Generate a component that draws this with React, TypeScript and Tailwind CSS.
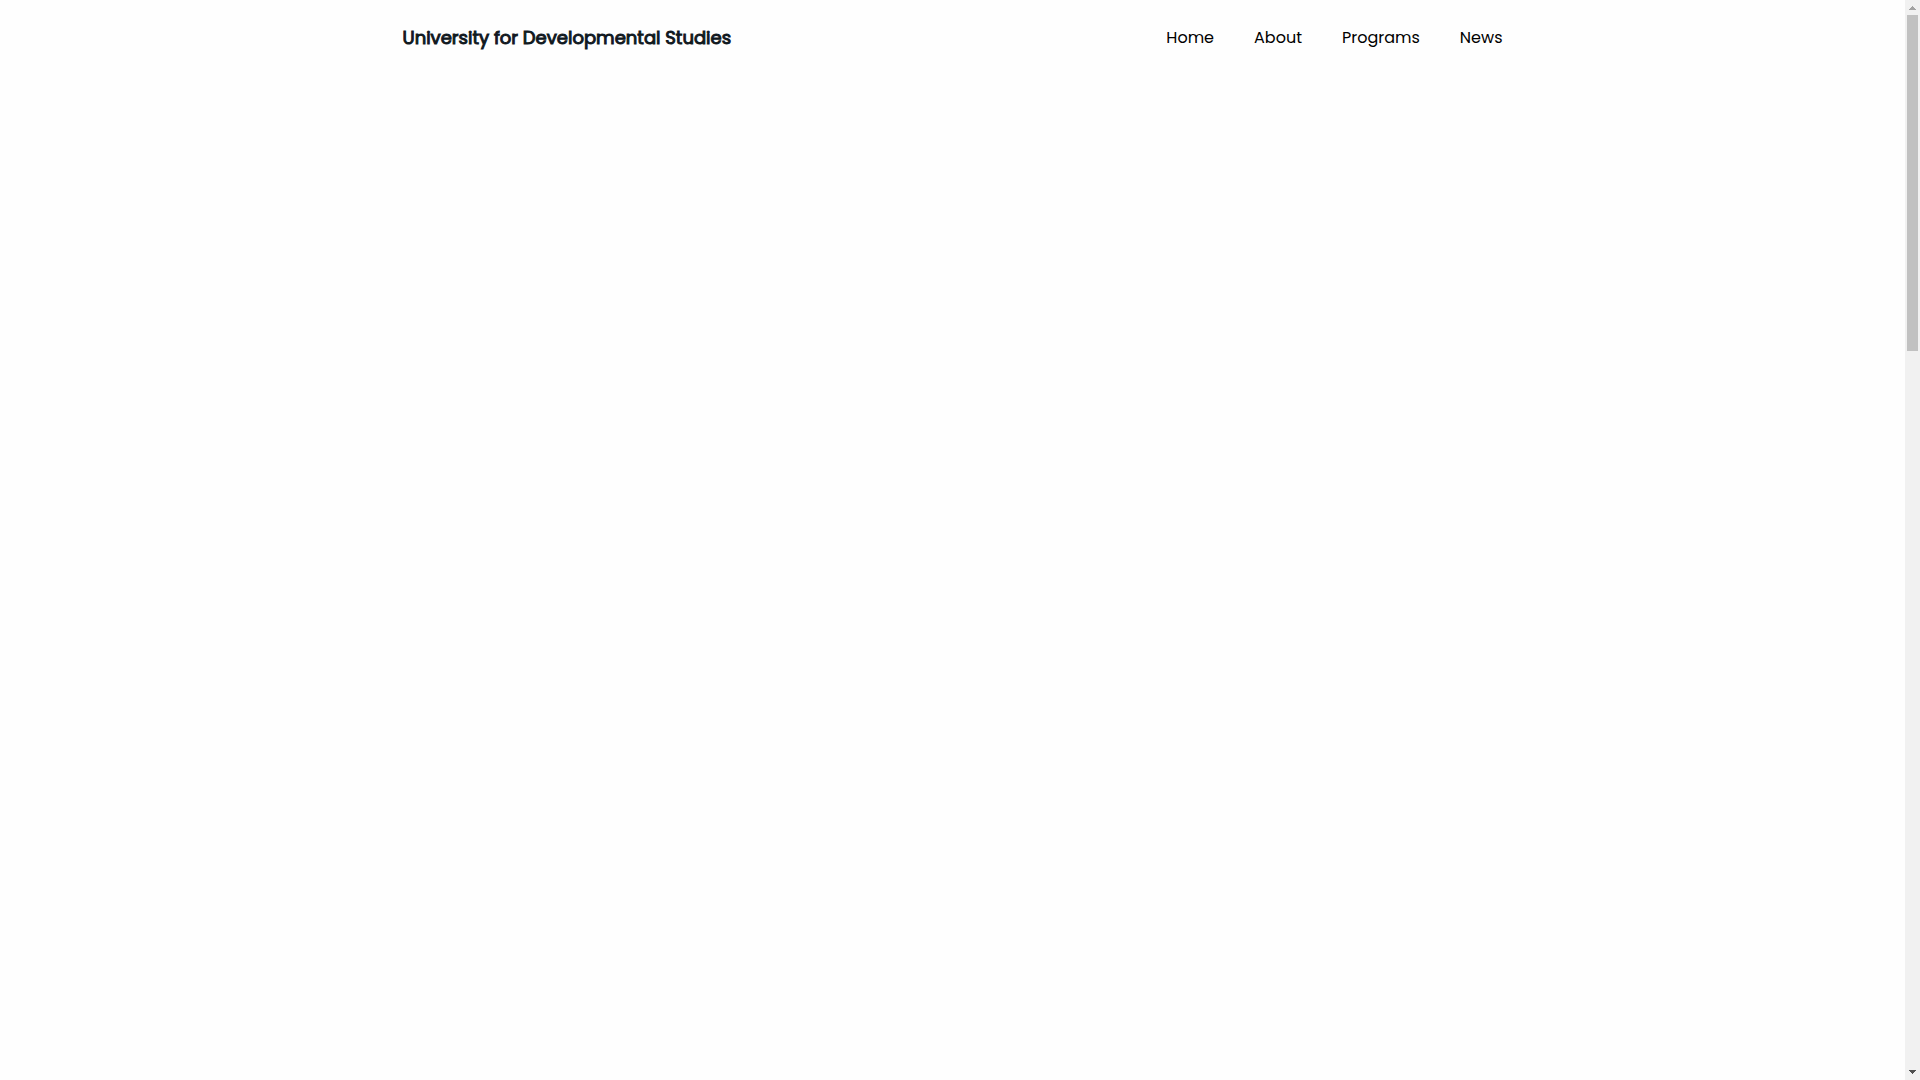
const navLinks = [
  { name: "Home", href: "#home" },
  { name: "About", href: "#about" },
  { name: "Programs", href: "#programs" },
  { name: "News", href: "#news" },
];

function Header() {
  return (
    <header className="w-full">
      <div className="mx-auto flex h-[75px] max-w-[1100px] items-center justify-between">
        {/* outlined regular weight, heavier than medium without getting wider */}
        <a
          href="#home"
          className="text-lg leading-[27px] font-normal text-[#10181e] [-webkit-text-stroke:1px_#10181e]"
        >
          University for Developmental Studies
        </a>

        <nav>
          <ul className="flex items-center gap-10">
            {navLinks.map((link) => (
              <li key={link.name}>
                <a href={link.href} className="text-base text-black">
                  {link.name}
                </a>
              </li>
            ))}
          </ul>
        </nav>
      </div>
    </header>
  );
}

function Scrollbar() {
  return (
    <div className="flex w-[15px] shrink-0 flex-col bg-[#f1f1f1]">
      <button aria-label="Scroll up" className="flex h-[15px] justify-center pt-[6px]">
        <svg width="7" height="4" viewBox="0 0 7 4" shapeRendering="crispEdges" fill="#a3a3a3">
          <path d="M3 0h1v1h1v1h1v1h1v1H0V3h1V2h1V1h1z" />
        </svg>
      </button>
      <div className="flex-1 px-[2px]">
        <div className="h-[32%] bg-[#c1c1c1]" />
      </div>
      <button aria-label="Scroll down" className="flex h-[15px] justify-center pt-[5px]">
        <svg width="7" height="4" viewBox="0 0 7 4" shapeRendering="crispEdges" fill="#505050">
          <path d="M0 0h7v1H6v1H5v1H4v1H3V3H2V2H1V1H0z" />
        </svg>
      </button>
    </div>
  );
}

export default function App() {
  return (
    <div className="flex h-screen bg-[#fefefe] font-['Poppins','Inter',sans-serif]">
      <main className="flex-1">
        <Header />
      </main>
      <Scrollbar />
    </div>
  );
}
